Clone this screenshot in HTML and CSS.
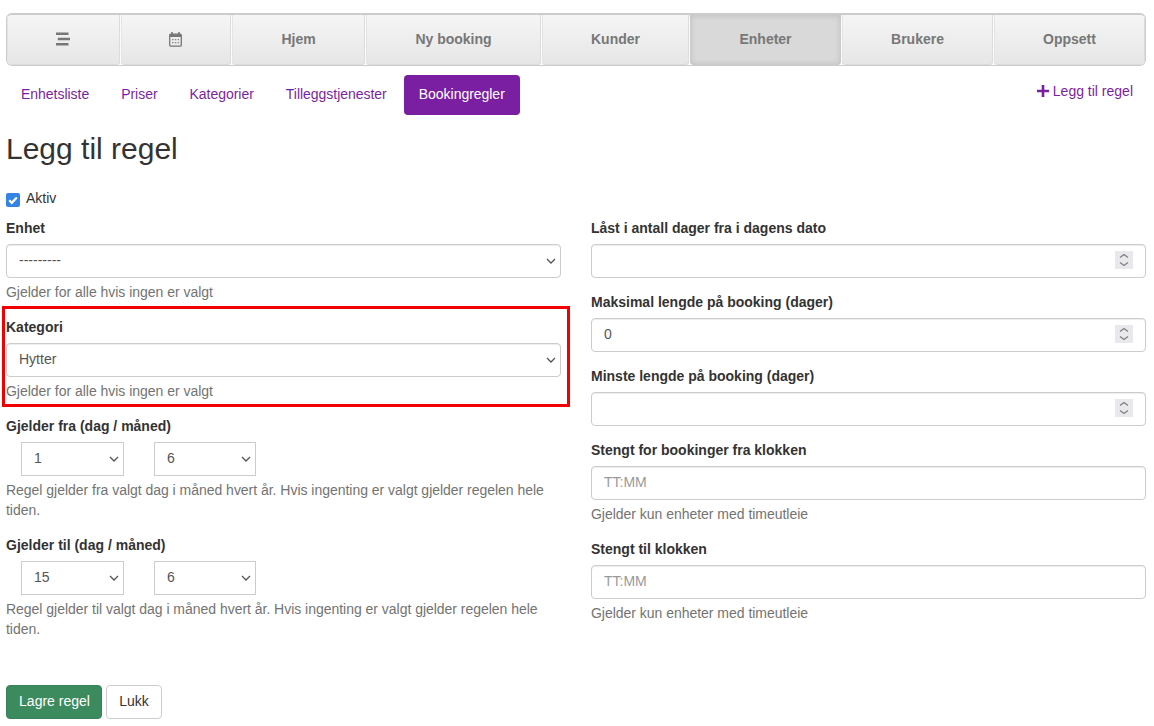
FILE: index.html
```html
<!DOCTYPE html>
<html lang="no">
<head>
<meta charset="utf-8">
<title>Legg til regel</title>
<link rel="stylesheet" href="styles.css">
</head>
<body>
<nav class="topnav">
  <a class="tab tab-menu" href="#"><svg class="icon" width="14" height="14" viewBox="0 0 14 14"><path d="M0 0.500h12.500V3H0zM1.800 5.800H14v2.400H1.800zM0 11h12.500v2.500H0z" fill="#777"/></svg></a>
  <a class="tab tab-cal" href="#"><svg class="icon" width="13" height="15" viewBox="0 0 13 15"><path d="M3 0v3M10 0v3" stroke="#777" stroke-width="1.600" fill="none"/><rect x="0.700" y="2.200" width="11.600" height="12" rx="1.200" fill="none" stroke="#777" stroke-width="1.300"/><rect x="0.700" y="2.200" width="11.600" height="2.800" fill="#777"/><path d="M3 7h1.500v1.300H3zM5.800 7h1.500v1.300H5.800zM8.600 7h1.500v1.300H8.600zM3 10h1.500v1.300H3zM5.800 10h1.500v1.300H5.800zM8.600 10h1.500v1.300H8.600z" fill="#888"/></svg></a>
  <a class="tab tab-home" href="#">Hjem</a>
  <a class="tab tab-new" href="#">Ny booking</a>
  <a class="tab tab-cust" href="#">Kunder</a>
  <a class="tab tab-unit active" href="#">Enheter</a>
  <a class="tab tab-users" href="#">Brukere</a>
  <a class="tab tab-setup" href="#">Oppsett</a>
</nav>

<div class="subnav">
  <ul class="pills">
    <li><a href="#">Enhetsliste</a></li>
    <li><a href="#">Priser</a></li>
    <li><a href="#">Kategorier</a></li>
    <li><a href="#">Tilleggstjenester</a></li>
    <li><a class="current" href="#">Bookingregler</a></li>
  </ul>
  <a class="add-link" href="#"><svg width="12" height="12" viewBox="0 0 12 12"><path d="M4.700 0h2.600v4.700H12v2.600H7.300V12H4.700V7.300H0V4.700h4.700z" fill="#7b1fa2"/></svg>Legg til regel</a>
</div>

<h1 class="title">Legg til regel</h1>

<form class="form">
  <div class="col">
    <label class="check"><input type="checkbox" checked> Aktiv</label>
    <div class="group">
      <label class="label">Enhet</label>
      <select class="control select"><option>---------</option></select>
      <p class="help">Gjelder for alle hvis ingen er valgt</p>
    </div>
    <div class="group highlight">
      <label class="label">Kategori</label>
      <select class="control select"><option>Hytter</option></select>
      <p class="help">Gjelder for alle hvis ingen er valgt</p>
    </div>
    <div class="group">
      <label class="label">Gjelder fra (dag / måned)</label>
      <div class="pair">
        <select class="small select small-a"><option>1</option></select>
        <select class="small select small-b"><option>6</option></select>
      </div>
      <p class="help">Regel gjelder fra valgt dag i måned hvert år. Hvis ingenting er valgt gjelder regelen hele tiden.</p>
    </div>
    <div class="group">
      <label class="label">Gjelder til (dag / måned)</label>
      <div class="pair">
        <select class="small select small-a"><option>15</option></select>
        <select class="small select small-b"><option>6</option></select>
      </div>
      <p class="help">Regel gjelder til valgt dag i måned hvert år. Hvis ingenting er valgt gjelder regelen hele tiden.</p>
    </div>
  </div>
  <div class="col col-right">
    <div class="group plain">
      <label class="label">Låst i antall dager fra i dagens dato</label>
      <input class="control" type="number">
    </div>
    <div class="group plain">
      <label class="label">Maksimal lengde på booking (dager)</label>
      <input class="control" type="number" value="0">
    </div>
    <div class="group plain">
      <label class="label">Minste lengde på booking (dager)</label>
      <input class="control" type="number">
    </div>
    <div class="group">
      <label class="label">Stengt for bookinger fra klokken</label>
      <input class="control" type="text" placeholder="TT:MM">
      <p class="help">Gjelder kun enheter med timeutleie</p>
    </div>
    <div class="group">
      <label class="label">Stengt til klokken</label>
      <input class="control" type="text" placeholder="TT:MM">
      <p class="help">Gjelder kun enheter med timeutleie</p>
    </div>
  </div>
  <div class="actions">
    <button class="btn btn-save" type="button">Lagre regel</button>
    <button class="btn btn-close" type="button">Lukk</button>
  </div>
</form>
</body>
</html>
```

FILE: styles.css
```css
* { box-sizing: border-box; }

html, body { margin: 0; padding: 0; }

body {
  padding: 13px 8px 0 6px;
  font-family: "Liberation Sans", Arial, sans-serif;
  font-size: 14px;
  line-height: 20px;
  color: #333;
  background: #fff;
}

a { text-decoration: none; }

.topnav {
  display: flex;
  gap: 1px;
  height: 53px;
  width: 1140px;
  border: 1px solid #ccc;
  border-top-width: 2px;
  border-radius: 6px;
  overflow: hidden;
  background: #fbfbfb;
}

.tab {
  display: flex;
  align-items: center;
  justify-content: center;
  padding-bottom: 2px;
  font-weight: 700;
  color: #777;
  background: linear-gradient(to bottom, #f5f5f5, #e6e6e6);
  border-radius: 0 0 4px 4px;
  box-shadow: inset -1px 0 0 #dcdcdc, inset 1px 0 0 #e4e4e4, inset 0 -1px 0 #dcdcdc;
}

.tab-menu { width: 113px; padding-right: 2px; }
.tab-cal { width: 110px; padding-right: 2px; }
.tab-home { width: 133px; }
.tab-new { width: 175px; }
.tab-cust { width: 147px; }
.tab-unit { width: 151px; }
.tab-users { width: 151px; }
.tab-setup { flex: 1; }

.tab.active {
  background: #d9d9d9;
  box-shadow: inset 0 0 6px rgba(0, 0, 0, 0.15);
}

.subnav {
  display: flex;
  justify-content: space-between;
  margin-top: 9px;
  width: 1140px;
}

.pills {
  display: flex;
  list-style: none;
  margin: 0;
  padding: 0;
  letter-spacing: -0.03px;
}

.pills a {
  display: block;
  height: 40px;
  padding: 9px 15px 11px;
  color: #7b1fa2;
  border-radius: 4px;
  margin-right: 2px;
}

.pills a.current {
  background: #7b1fa2;
  color: #fff;
}

.add-link {
  display: flex;
  align-items: center;
  gap: 4px;
  height: 20px;
  margin: 6px 13px 0 0;
  color: #7b1fa2;
}

.title {
  margin: 16px 0 21px;
  font-size: 30px;
  line-height: 36px;
  font-weight: 400;
}

.form {
  display: grid;
  grid-template-columns: 555px 555px;
  column-gap: 30px;
  width: 1140px;
}

.col { display: flex; flex-direction: column; }
.col-right { padding-top: 30px; }

.check {
  display: flex;
  align-items: center;
  gap: 6px;
  height: 20px;
  margin-bottom: 10px;
}

.check input {
  appearance: none;
  margin: 4px 0 0;
  width: 14px;
  height: 14px;
  border-radius: 2px;
  background: #3584e4 url("data:image/svg+xml,%3Csvg xmlns='http://www.w3.org/2000/svg' viewBox='0 0 14 14'%3E%3Cpath d='M3.200 7.200l2.600 2.600 5-5.400' fill='none' stroke='%23fff' stroke-width='2.200'/%3E%3C/svg%3E") center / 14px 14px no-repeat;
}

.group { margin-bottom: 15px; }
.group.plain { margin-bottom: 14px; }

.label {
  display: block;
  font-weight: 700;
  margin-bottom: 6px;
}

.control {
  display: block;
  width: 100%;
  height: 34px;
  padding: 5px 12px 7px;
  font: inherit;
  color: #555;
  background-color: #fff;
  border: 1px solid #ccc;
  border-radius: 4px;
  box-shadow: inset 0 1px 1px rgba(0, 0, 0, 0.075);
}

.control::placeholder { color: #999; }

.control::-webkit-inner-spin-button {
  appearance: none;
  opacity: 1;
  width: 18px;
  height: 18px;
  background: #e9e9ed url("data:image/svg+xml,%3Csvg xmlns='http://www.w3.org/2000/svg' viewBox='0 0 18 18'%3E%3Cpath d='M5 6.500l4-3 4 3M5 11.500l4 3 4-3' fill='none' stroke='%23808080' stroke-width='1.300'/%3E%3C/svg%3E") center / 18px 18px no-repeat;
}

.select {
  appearance: none;
  background-image: url("data:image/svg+xml,%3Csvg xmlns='http://www.w3.org/2000/svg' viewBox='0 0 10 6'%3E%3Cpath d='M1 1l4 4 4-4' fill='none' stroke='%23555' stroke-width='1.300'/%3E%3C/svg%3E");
  background-repeat: no-repeat;
  background-size: 10px 6px;
  background-position: right 4px center;
}

.help {
  margin: 4px 0 0;
  color: #737373;
  letter-spacing: -0.025px;
}

.highlight { position: relative; }

.highlight::after {
  content: "";
  position: absolute;
  inset: -11px -9px -6px -4px;
  border: 3px solid #f00000;
  pointer-events: none;
}

.pair {
  display: flex;
  padding-left: 15px;
}

.small {
  height: 34px;
  padding: 5px 12px 7px;
  font: inherit;
  color: #555;
  background-color: #fff;
  border: 1px solid #ccc;
  border-radius: 0;
}

.small-a { width: 103px; margin-right: 30px; }
.small-b { width: 102px; }

.actions {
  grid-column: 1 / -1;
  display: flex;
  gap: 4px;
  margin-top: 31px;
}

.btn {
  height: 34px;
  padding: 5px 0 7px;
  font: inherit;
  white-space: nowrap;
  border: 1px solid transparent;
  border-radius: 4px;
}

.btn-save { width: 96px; padding-left: 1px; background: #3c8b5f; color: #fff; border-color: #37825a; }
.btn-close { width: 56px; background: #fff; color: #333; border-color: #ccc; }
```
